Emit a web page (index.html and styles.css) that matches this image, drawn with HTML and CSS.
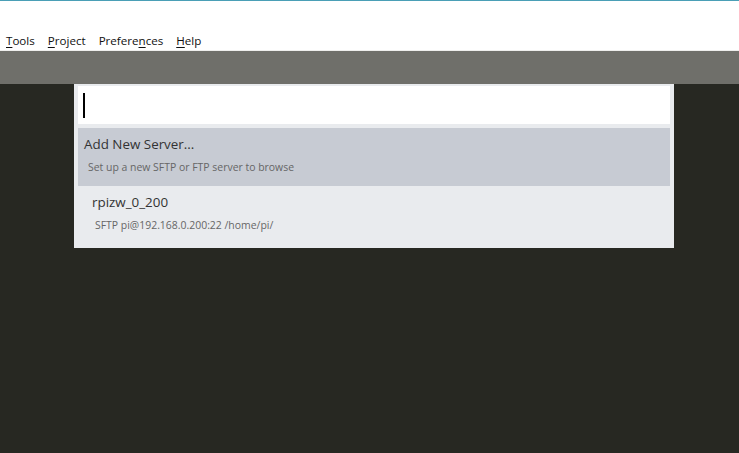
FILE: index.html
```html
<!DOCTYPE html>
<html>
<head>
<meta charset="utf-8">
<link rel="stylesheet" href="styles.css">
</head>
<body>
<div class="menubar">
  <span class="menu"><u>T</u>ools</span>
  <span class="menu"><u>P</u>roject</span>
  <span class="menu">Prefere<u>n</u>ces</span>
  <span class="menu"><u>H</u>elp</span>
</div>
<div class="toolbar"></div>
<div class="workspace">
  <div class="panel">
    <div class="input"><span class="caret"></span></div>
    <div class="item selected">
      <div class="title">Add New Server...</div>
      <div class="sub">Set up a new SFTP or FTP server to browse</div>
    </div>
    <div class="item server">
      <div class="title">rpizw_0_200</div>
      <div class="sub">SFTP pi@192.168.0.200:22 /home/pi/</div>
    </div>
  </div>
</div>
</body>
</html>
```
FILE: styles.css
```css
html, body {
  margin: 0;
  padding: 0;
  height: 100%;
}
body {
  background: #272822;
  font-family: "Open Sans", "Noto Sans", sans-serif;
  overflow: hidden;
}
.menubar {
  height: 51px;
  box-sizing: border-box;
  border-top: 1px solid #4a9fb6;
  border-bottom: 1px solid #eeeeec;
  background: #ffffff;
  display: flex;
  align-items: flex-end;
  padding: 0 0 2px 6px;
  gap: 13px;
  font-size: 11.6px;
  color: #111;
}
.menu u {
  text-underline-offset: 2px;
}
.toolbar {
  height: 33px;
  background: #6f6f6a;
}
.workspace {
  padding-left: 74px;
}
.panel {
  width: 600px;
  box-sizing: border-box;
  background: #e9ebee;
  padding: 2px 4px 4px 4px;
}
.input {
  height: 38px;
  background: #ffffff;
  display: flex;
  align-items: center;
  padding-left: 5px;
  margin-bottom: 4px;
}
.caret {
  width: 2px;
  height: 25px;
  background: #000;
}
.item {
  height: 58px;
  box-sizing: border-box;
}
.selected {
  background: #c7cbd3;
  padding: 5px 6px 0 6px;
}
.server {
  padding: 5px 14px 0 14px;
}
.title {
  font-size: 13.4px;
  color: #333;
  line-height: 22px;
}
.sub {
  font-size: 10.45px;
  color: #666;
  line-height: 18px;
  margin-top: 3px;
  padding-left: 4px;
}
.server .sub {
  padding-left: 3px;
}
```
